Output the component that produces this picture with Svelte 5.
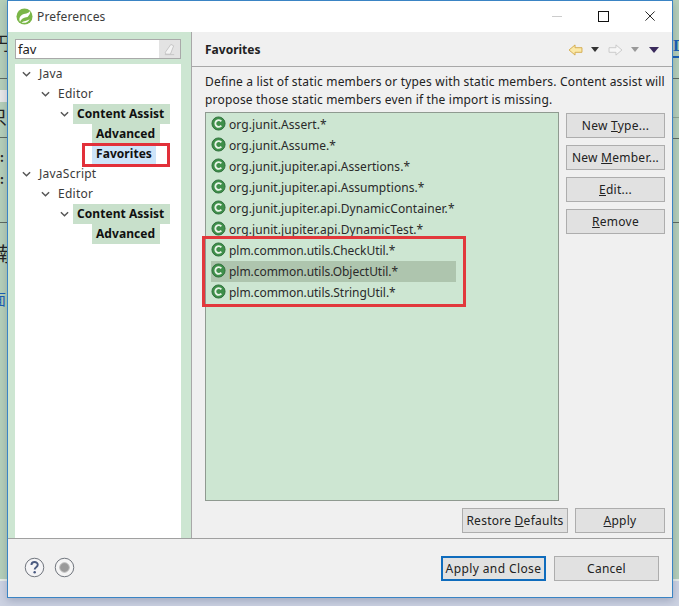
<script>
  const tree = [
    { label: 'Java', level: 0, open: true },
    { label: 'Editor', level: 1, open: true },
    { label: 'Content Assist', level: 2, open: true, hit: 'wide' },
    { label: 'Advanced', level: 3, hit: 'adv' },
    { label: 'Favorites', level: 3, hit: 'sel', boxed: true },
    { label: 'JavaScript', level: 0, open: true },
    { label: 'Editor', level: 1, open: true },
    { label: 'Content Assist', level: 2, open: true, hit: 'wide' },
    { label: 'Advanced', level: 3, hit: 'adv' }
  ];
  const favorites = [
    'org.junit.Assert.*',
    'org.junit.Assume.*',
    'org.junit.jupiter.api.Assertions.*',
    'org.junit.jupiter.api.Assumptions.*',
    'org.junit.jupiter.api.DynamicContainer.*',
    'org.junit.jupiter.api.DynamicTest.*'
  ];
  const custom = ['plm.common.utils.CheckUtil.*', 'plm.common.utils.ObjectUtil.*', 'plm.common.utils.StringUtil.*'];
</script>

{#snippet classIcon()}
  <svg class="cicon" viewBox="0 0 16 16" width="15" height="15" aria-hidden="true">
    <circle cx="8" cy="8" r="7" fill="#3f8f4a" stroke="#2f6f3c" stroke-width="1" />
    <path d="M11 5.7A3.6 3.6 0 1 0 11 10.3" fill="none" stroke="#e8f3e8" stroke-width="2" />
  </svg>
{/snippet}

{#snippet favRow(name, selected)}
  <li class="fav" class:selected>
    {@render classIcon()}
    <span>{name}</span>
  </li>
{/snippet}

<div class="desktop">
  <div class="backdrop">
    <span class="frag f1">円</span>
    <span class="frag f2">只</span>
    <span class="frag f3">:</span>
    <span class="frag f4">:</span>
    <span class="frag f5">楠</span>
    <span class="frag f6">面</span>
    <span class="rule r1"></span><span class="rule r2"></span><span class="rule r3"></span><span class="rule r4"></span>
    <span class="rule r5"></span><span class="rule r6"></span><span class="rule r7"></span><span class="rule r8"></span>
    <span class="frag f7">D</span>
    <div class="bottom"></div>
  </div>

  <div class="window">
    <header class="titlebar">
      <svg class="logo" viewBox="0 0 18 18" width="17" height="17" aria-hidden="true">
        <circle cx="9" cy="9" r="8.5" fill="#7ab648" />
        <path d="M15 3C13.500 6.500 9 5.500 5.800 7.800 3.300 9.600 3 12.800 4.300 14.800 5 11.800 8.500 9.600 12.300 9.400 14.200 8 15.300 5.500 15 3Z" fill="#fff" />
        <path d="M5.800 15.300C9 16.500 13 15.200 14.500 11.800 11.500 13.600 8.300 13.500 5.800 15.300Z" fill="#fff" />
      </svg>
      <span class="wintitle">Preferences</span>
      <div class="winbtns">
        <span class="min"></span>
        <span class="max"></span>
        <svg viewBox="0 0 12 12" width="11" height="11" aria-hidden="true"><path d="M.5.5l10 10M10.5.5l-10 10" stroke="#111" stroke-width="1" fill="none" /></svg>
      </div>
    </header>

    <div class="main">
      <aside class="sidebar">
        <div class="search">
          <span class="query">fav</span>
          <span class="clear">
            <svg viewBox="0 0 14 14" width="13" height="13" aria-hidden="true"><path d="M8.5 1.5l3 1.5-3.5 9H3l-.5-2z" fill="#f4f4f4" stroke="#c4c4c4" /><path d="M2 12.5h10" stroke="#c4c4c4" /></svg>
          </span>
        </div>
        <ul class="tree">
          {#each tree as node}
            <li class="node lv{node.level}">
              {#if node.open}
                <svg class="chev" viewBox="0 0 10 6" width="9" height="6" aria-hidden="true"><path d="M1 1l4 4 4-4" fill="none" stroke="#555" stroke-width="1.6" /></svg>
              {/if}
              <span class="label {node.hit ?? ''}">{node.label}</span>
              {#if node.boxed}<span class="redbox"></span>{/if}
            </li>
          {/each}
        </ul>
      </aside>

      <section class="page">
        <div class="pagehead">
          <h1>Favorites</h1>
          <div class="nav">
            <svg viewBox="0 0 16 13" width="15" height="12" aria-hidden="true"><path d="M1 6.500L7.500 1v3H15v5H7.500v3z" fill="#fbe9a8" stroke="#d3a94a" /></svg>
            <span class="tri dark"></span>
            <svg class="fwd" viewBox="0 0 16 13" width="15" height="12" aria-hidden="true"><path d="M15 6.500L8.500 1v3H1v5h7.500v3z" fill="#f6f6f6" stroke="#c8c8c8" /></svg>
            <span class="tri gray"></span>
            <span class="tri purple"></span>
          </div>
        </div>
        <div class="pagebody">
          <p class="desc">Define a list of static members or types with static members. Content assist will<br />propose those static members even if the import is missing.</p>
          <div class="editor">
            <div class="listbox">
              <ul class="favs">
                {#each favorites as f}{@render favRow(f, false)}{/each}
              </ul>
              <ul class="favs marked">
                {#each custom as f, i}{@render favRow(f, i === 1)}{/each}
              </ul>
            </div>
            <div class="sidebtns">
              <button>New <u>T</u>ype...</button>
              <button>New <u>M</u>ember...</button>
              <button><u>E</u>dit...</button>
              <button><u>R</u>emove</button>
            </div>
          </div>
          <div class="pageactions">
            <button class="restore">Restore <u>D</u>efaults</button>
            <button class="apply"><u>A</u>pply</button>
          </div>
        </div>
      </section>
    </div>

    <footer class="footer">
      <div class="helps">
        <svg viewBox="0 0 22 22" width="21" height="21" aria-hidden="true">
          <circle cx="11" cy="11" r="9.700" fill="#f4f4f6" stroke="#6a6f78" stroke-width="1" />
          <path d="M7.800 8.300c0-4 6.600-4 6.600-.2 0 2.700-3.200 2.500-3.200 5" fill="none" stroke="#4a5a80" stroke-width="2" />
          <circle cx="11.200" cy="16" r="1.300" fill="#4a5a80" />
        </svg>
        <svg viewBox="0 0 22 22" width="21" height="21" aria-hidden="true">
          <circle cx="11" cy="11" r="9.700" fill="#f4f4f4" stroke="#6a6f78" stroke-width="1" />
          <circle cx="11" cy="11" r="5" fill="#9a9a9a" stroke="#b8b8b8" />
        </svg>
      </div>
      <div class="actions">
        <button class="primary">Apply and Close</button>
        <button class="cancel">Cancel</button>
      </div>
    </footer>
  </div>
</div>

<style>
  :global(body) { margin: 0; background: #b5cfb9; }
  ul { list-style: none; margin: 0; padding: 0; }
  p, h1 { margin: 0; }

  .desktop {
    position: relative;
    width: 679px;
    height: 606px;
    overflow: hidden;
    padding-left: 7px;
    box-sizing: border-box;
    font-family: "Noto Sans", "Open Sans", sans-serif;
    font-size: 12px;
    color: #1c1c1c;
  }
  .backdrop { position: absolute; inset: 0; }
  .bottom { position: absolute; left: 0; right: 0; top: 579px; bottom: 0; background: #ccd2e2; border-top: 2px solid #e8eee8; }
  .frag { position: absolute; left: -8px; font: 18px "Noto Sans CJK SC", sans-serif; color: #222; line-height: 1; }
  .f1 { top: 33px; }
  .f2 { top: 107px; left: -11px; }
  .f3 { top: 151px; left: 0; font-size: 12px; font-weight: 700; }
  .f4 { top: 173px; left: 0; font-size: 12px; font-weight: 700; }
  .f5 { top: 244px; left: -10px; font-size: 20px; }
  .f6 { top: 291px; left: -9px; font-size: 15px; color: #1a5fb4; }
  .f7 { left: 673px; top: 36px; font: 700 17px "Liberation Serif", serif; color: #1a5fb4; border-bottom: 2px solid #1a5fb4; width: 12px; }
  .rule { position: absolute; width: 7px; height: 1px; background: #5e6a60; left: 0; }
  .r1 { top: 78px; } .r2 { top: 90px; background: #e8e8e8; height: 12px; } .r3 { top: 137px; } .r4 { top: 222px; }
  .r5 { left: 672px; top: 78px; } .r6 { left: 672px; top: 138px; } .r7 { left: 672px; top: 222px; } .r8 { left: 672px; top: 117px; background: #8fa592; }

  .window {
    position: relative;
    width: 666px;
    height: 598px;
    box-sizing: border-box;
    border: 1px solid #3a84c4;
    background: #f0f0f0;
    display: flex;
    flex-direction: column;
    box-shadow: 0 3px 8px rgba(40, 50, 90, .25);
  }

  .titlebar {
    height: 31px;
    flex: none;
    background: #fff;
    display: flex;
    align-items: center;
    padding-left: 8px;
    font-size: 12px;
    color: #3c3c3c;
  }
  .wintitle { margin-left: 4px; letter-spacing: .15px; }
  .winbtns { margin-left: auto; display: flex; align-items: center; padding-right: 16px; }
  .min { width: 10px; height: 1px; background: #ccc; margin-right: 36px; }
  .max { width: 9px; height: 9px; border: 1px solid #111; margin-right: 36px; }

  .main { flex: 1; min-height: 0; display: flex; border-bottom: 1px solid #a0a0a0; }

  .sidebar {
    width: 184px;
    flex: none;
    box-sizing: border-box;
    background: #cde6d2;
    padding: 7px 10px 0 7px;
    border-right: 1px solid #a8a8a8;
    display: flex;
    flex-direction: column;
    gap: 5px;
  }
  .search {
    height: 20px;
    box-sizing: border-box;
    border: 1px solid #a9a9a9;
    background: #fff;
    display: flex;
    align-items: center;
    justify-content: space-between;
    padding-left: 2px;
    flex: none;
  }
  .query { font-size: 13px; color: #222; }
  .clear { width: 21px; height: 18px; background: #e3e3e3; display: flex; align-items: center; justify-content: center; }

  .tree { flex: 1; background: #fff; letter-spacing: .25px; }
  .node { position: relative; height: 20px; line-height: 20px; color: #3a3a3a; }
  .chev { position: absolute; top: 7px; }
  .label { position: absolute; top: 0; height: 20px; white-space: nowrap; }
  .lv0 .chev { left: 7px; } .lv0 .label { left: 24px; }
  .lv1 .chev { left: 26px; } .lv1 .label { left: 43px; }
  .lv2 .chev { left: 45px; } .lv2 .label { left: 58px; padding: 0 4px; }
  .lv3 .label { left: 77px; padding: 0 4px; }
  .wide, .adv, .sel { font-weight: 700; color: #101010; letter-spacing: .05px; }
  .wide, .adv { background: #c8e0cb; }
  .wide { width: 89px; }
  .adv { width: 60px; }
  .sel { background: #cde4f9; width: 56px; }
  .redbox { position: absolute; left: 67px; top: -1px; width: 88px; height: 24px; box-sizing: border-box; border: 3px solid #e2303a; pointer-events: none; }

  .page { flex: 1; min-width: 0; display: flex; flex-direction: column; }
  .pagehead {
    height: 35px;
    flex: none;
    box-sizing: border-box;
    border-bottom: 1px solid #a8a8a8;
    display: flex;
    align-items: center;
    justify-content: space-between;
    padding: 1px 13px 0 13px;
  }
  h1 { font-size: 12px; font-weight: 700; color: #222; }
  .nav { display: flex; align-items: center; }
  .tri { width: 0; height: 0; border-left: 4px solid transparent; border-right: 4px solid transparent; border-top: 5px solid #333; }
  .tri.dark { margin: 0 9px 0 8px; }
  .tri.gray { border-top-color: #999; margin: 0 10px 0 8px; }
  .tri.purple { border-left-width: 5px; border-right-width: 5px; border-top: 6px solid #3a2a5c; }

  .pagebody { flex: 1; min-height: 0; display: flex; flex-direction: column; padding: 6px 7px 5px 13px; }
  .desc { line-height: 18px; height: 39px; flex: none; letter-spacing: .18px; color: #222; white-space: nowrap; }

  .editor { flex: 1; min-height: 0; display: flex; gap: 7px; }
  .listbox {
    width: 354px;
    flex: none;
    box-sizing: border-box;
    border: 1px solid #8f9a90;
    background: #cde6d2;
    padding: 1px 0 0 5px;
    letter-spacing: .075px;
  }
  .favs { width: 245px; }
  .fav { height: 21px; display: flex; align-items: center; gap: 3px; color: #2a2a2a; white-space: nowrap; }
  .fav.selected { background: #aec5ae; }
  .cicon { flex: none; margin-top: -2px; }
  .marked { position: relative; letter-spacing: -.05px; }
  .marked::after {
    content: '';
    position: absolute;
    left: -9px;
    top: -4px;
    width: 264px;
    height: 71px;
    box-sizing: border-box;
    border: 3px solid #e2383c;
  }

  button {
    font: inherit;
    color: #222;
    background: #e1e1e1;
    border: 1px solid #adadad;
    padding: 0;
    height: 25px;
    box-sizing: border-box;
    letter-spacing: .25px;
  }
  .sidebtns { display: flex; flex-direction: column; gap: 7px; width: 99px; flex: none; margin-top: 1px; }

  .pageactions { flex: none; display: flex; justify-content: flex-end; gap: 7px; margin-top: 7px; }
  .restore { width: 106px; }
  .apply { width: 90px; }

  .footer { height: 58px; flex: none; display: flex; justify-content: space-between; padding: 17px 13px 0 16px; box-sizing: border-box; }
  .helps { display: flex; gap: 9px; padding-top: 1px; height: 22px; }
  .actions { display: flex; gap: 8px; }
  .primary { width: 105px; border: 2px solid #0f6cbd; letter-spacing: .4px; }
  .cancel { width: 105px; }
</style>
